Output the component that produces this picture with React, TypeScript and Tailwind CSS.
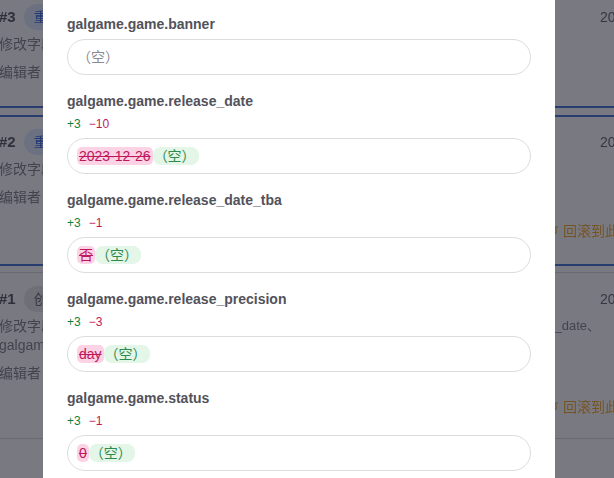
import React from 'react';

type Diff = { removed: string; added: string; plus: number; minus: number };

const FONT = { fontFamily: '"Liberation Sans", "Noto Sans CJK SC", sans-serif' };

// history cards sitting behind the modal
function HistoryCard({
  no,
  tag,
  tagTone,
  extra,
  rollback,
  className,
}: {
  no: string;
  tag: string;
  tagTone: 'blue' | 'gray';
  extra?: boolean;
  rollback?: boolean;
  className: string;
}) {
  return (
    <div className={`flex flex-col overflow-hidden ${className}`}>
      <div className="flex items-center h-[30px] w-[700px]">
        <div className="w-[601px] shrink-0 flex items-center">
          <span className="font-bold text-[15px] text-[#3f3f46]">{no}</span>
          <span
            className={`ml-2 px-2.5 h-[26px] rounded-full flex items-center text-[14px] whitespace-nowrap ${
              tagTone === 'blue' ? 'bg-[#dbeafe] text-[#1d4ed8]' : 'bg-[#e4e4e7] text-[#52525b]'
            }`}
          >
            {tag}
          </span>
        </div>
        <span className="text-[14px] text-[#52525b] whitespace-nowrap">2024-01-12 18:20</span>
      </div>
      <div className="flex items-center justify-between w-[601px] h-[20px] mt-[2px] text-[14px] text-[#71717a]">
        <span>修改字段</span>
        <span className="text-[13px]">{extra ? 'galgame.game.release_date、' : ''}</span>
      </div>
      {extra && <div className="h-[19px] text-[14px] leading-[19px] text-[#71717a]">galgame.game.status</div>}
      <div className="flex items-center h-[24px] mt-[6px] text-[14px] text-[#71717a]">
        <span>编辑者</span>
        <span className="ml-2 w-5 h-5 rounded-full bg-[#d4d4d8]" />
      </div>
      {rollback && (
        <div className="flex items-center h-[24px] mt-[10px] pl-[548px] w-[700px] text-[14px] text-[#f59e0b] whitespace-nowrap">
          <span className="mr-1">↺</span>回滚到此版本
        </div>
      )}
    </div>
  );
}

function Field({ name, diff, placeholder }: { name: string; diff?: Diff; placeholder?: string }) {
  return (
    <div className="flex flex-col">
      <div className="h-5 leading-5 text-[14px] font-bold text-[#52525b]">{name}</div>
      {diff && (
        <div className="mt-[5px] h-4 flex items-center gap-2 text-[12px] leading-4">
          <span className="text-[#15803d]">+{diff.plus}</span>
          <span className="text-[#be185d]">−{diff.minus}</span>
        </div>
      )}
      <div
        className={`${diff ? 'mt-[6px]' : 'mt-[5px]'} h-9 rounded-[18px] border border-[#dcdce0] pl-[9px] flex items-center text-[14px]`}
      >
        {diff ? (
          <>
            <span className="h-[18px] leading-[18px] px-[2px] rounded-[5px] bg-[#fbd3e5] text-[#be185d] line-through">
              {diff.removed}
            </span>
            <span className="h-[18px] leading-[18px] pl-[1px] pr-[3px] rounded-[8px] bg-[#e3f6e8] text-[#2f8a4e]">
              {diff.added}
            </span>
          </>
        ) : (
          <span className="text-[#8b8b93]">{placeholder}</span>
        )}
      </div>
    </div>
  );
}

export default function App() {
  const fields: { name: string; diff?: Diff }[] = [
    { name: 'galgame.game.release_date', diff: { removed: '2023-12-26', added: '（空）', plus: 3, minus: 10 } },
    { name: 'galgame.game.release_date_tba', diff: { removed: '否', added: '（空）', plus: 3, minus: 1 } },
    { name: 'galgame.game.release_precision', diff: { removed: 'day', added: '（空）', plus: 3, minus: 3 } },
    { name: 'galgame.game.status', diff: { removed: '0', added: '（空）', plus: 3, minus: 1 } },
  ];

  return (
    <div className="relative w-[614px] h-[478px] overflow-hidden bg-white" style={FONT}>
      {/* page content under the backdrop */}
      <div className="flex flex-col ml-[-1px] w-[620px] blur-[0.7px]">
        <HistoryCard no="#3" tag="重新编辑" tagTone="blue" className="pt-[2px] h-[108px] border-b-2 border-[#2f5fd0]" />
        <HistoryCard
          no="#2"
          tag="重新编辑"
          tagTone="blue"
          rollback
          className="mt-[7px] pt-[10px] h-[151px] border-t-2 border-b-2 border-[#2f5fd0]"
        />
        <HistoryCard
          no="#1"
          tag="创建"
          tagTone="gray"
          extra
          rollback
          className="mt-[6px] pt-[11px] h-[167px] border-t border-b border-[#d4d4d8]"
        />
      </div>

      {/* backdrop */}
      <div className="absolute inset-0 bg-[#262634]/[0.62]" />

      {/* modal */}
      <div className="absolute inset-y-0 left-[43px] w-[512px] bg-white overflow-hidden">
        <div className="flex flex-col gap-4 px-6 pt-[14px]">
          <Field name="galgame.game.banner" placeholder="（空）" />
          {fields.map((f) => (
            <Field key={f.name} name={f.name} diff={f.diff} />
          ))}
        </div>
      </div>
    </div>
  );
}
